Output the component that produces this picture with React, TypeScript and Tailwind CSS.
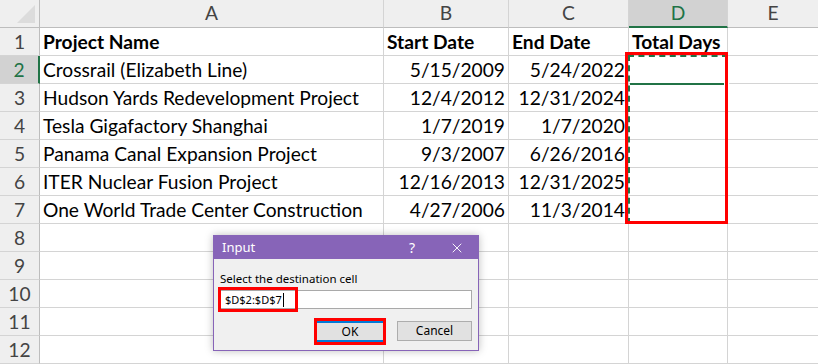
import { X } from 'lucide-react';

type Row = { name: string; start: string; end: string };

const rows: Row[] = [
  { name: 'Crossrail (Elizabeth Line)', start: '5/15/2009', end: '5/24/2022' },
  { name: 'Hudson Yards Redevelopment Project', start: '12/4/2012', end: '12/31/2024' },
  { name: 'Tesla Gigafactory Shanghai', start: '1/7/2019', end: '1/7/2020' },
  { name: 'Panama Canal Expansion Project', start: '9/3/2007', end: '6/26/2016' },
  { name: 'ITER Nuclear Fusion Project', start: '12/16/2013', end: '12/31/2025' },
  { name: 'One World Trade Center Construction', start: '4/27/2006', end: '11/3/2014' },
];

const columns = ['A', 'B', 'C', 'D', 'E'];

const cell = 'h-[28px] pt-[2px] border-r border-b border-[#d4d4d4] flex items-center overflow-visible whitespace-nowrap';

function ColumnHeader({ label }: { label: string }) {
  const active = label === 'D';
  return (
    <div
      className={`h-[28px] flex items-center justify-center border-r ${
        active
          ? 'bg-[#d2d2d2] text-[#217346] border-r-[#d4d4d4] border-b-2 border-b-[#217346]'
          : 'bg-[#efefef] text-[#444] border-r-[#d4d4d4] border-b border-b-[#bdbdbd]'
      }`}
    >
      {label}
    </div>
  );
}

function RowHeader({ n }: { n: number }) {
  const active = n === 2;
  return (
    <div
      className={`h-[28px] pt-[2px] flex items-center justify-center border-b ${
        active
          ? 'bg-[#d2d2d2] text-[#217346] border-b-[#d4d4d4] border-r-2 border-r-[#217346]'
          : 'bg-[#efefef] text-[#444] border-b-[#d4d4d4] border-r border-r-[#bdbdbd]'
      }`}
    >
      {n}
    </div>
  );
}

function InputDialog() {
  return (
    <div className="absolute left-[213px] top-[235px] w-[266px] h-[116px] border border-[#8764b8] bg-[#f0f0f0] shadow-[0_0_8px_rgba(0,0,0,0.25)] font-['Noto_Sans',sans-serif] text-[11px] text-black">
      <div className="h-[23px] bg-[#8764b8] flex items-center pl-[8px] text-white text-[13px]">
        <span>Input</span>
        <span className="ml-auto mr-[34px] text-[14px]">?</span>
        <X className="mr-[13px] h-[16px] w-[16px]" strokeWidth={1.4} />
      </div>
      <div className="px-[6px] pt-[13px]">
        <div className="leading-[14px] h-[16px] text-[11.5px]">Select the destination cell</div>
        <div className="relative mt-[2px] h-[19px] border border-[#a9a9a9] bg-white flex items-center pl-[4px] leading-none">
          <span>$D$2:$D$7</span>
          <span className="ml-[1px] h-[14px] w-px bg-black" />
          <div className="absolute left-[-3px] top-[-4px] w-[80px] h-[25px] border-[3px] border-[#ff0000]" />
        </div>
        <div className="mt-[12px] flex justify-end gap-[11px]">
          <div className="relative w-[72px] h-[27px] border-[3px] border-[#ff0000] -mt-[3px]">
            <div className="h-full bg-[#e1e1e1] border-y-2 border-[#0078d7] flex items-center justify-center text-[12px]">OK</div>
          </div>
          <div className="w-[75px] h-[20px] bg-[#e1e1e1] border border-[#adadad] flex items-center justify-center text-[12px]">
            Cancel
          </div>
        </div>
      </div>
    </div>
  );
}

export default function App() {
  return (
    <div className="relative w-[818px] h-[364px] overflow-hidden bg-white font-['Lato',sans-serif] text-[19.2px] text-black">
      <div className="grid grid-cols-[40px_344px_125px_120px_99px_91px]">
        {/* corner */}
        <div className="h-[28px] bg-[#efefef] border-r border-b border-[#bdbdbd] relative">
          <div className="absolute right-[4px] bottom-[4px] w-0 h-0 border-l-[18px] border-l-transparent border-b-[18px] border-b-[#dcdcdc]" />
        </div>
        {columns.map((c) => (
          <ColumnHeader key={c} label={c} />
        ))}

        <RowHeader n={1} />
        <div className={`${cell} pl-[3px] font-bold`}>Project Name</div>
        <div className={`${cell} pl-[3px] font-bold`}>Start Date</div>
        <div className={`${cell} pl-[3px] font-bold`}>End Date</div>
        <div className={`${cell} pl-[3px] font-bold`}>Total Days</div>
        <div className={cell} />

        {rows.map((r, i) => (
          <div key={r.name} className="contents">
            <RowHeader n={i + 2} />
            <div className={`${cell} pl-[3px]`}>{r.name}</div>
            <div className={`${cell} justify-end pr-[3px]`}>{r.start}</div>
            <div className={`${cell} justify-end pr-[3px]`}>{r.end}</div>
            <div className={cell} />
            <div className={cell} />
          </div>
        ))}

        {[8, 9, 10, 11, 12].map((n) => (
          <div key={n} className="contents">
            <RowHeader n={n} />
            <div className={cell} />
            <div className={cell} />
            <div className={cell} />
            <div className={cell} />
            <div className={cell} />
          </div>
        ))}
      </div>

      {/* copy marquee around D2:D7 */}
      <div className="absolute left-[628px] top-[55px] w-[100px] h-[169px] border-2 border-dashed border-[#217346]" />
      {/* active cell bottom edge + fill handle */}
      <div className="absolute left-[630px] top-[83px] w-[96px] h-[2px] bg-[#217346]" />
      <div className="absolute left-[724px] top-[81px] w-[5px] h-[5px] bg-[#217346] border border-white" />
      {/* highlight box */}
      <div className="absolute left-[625px] top-[52px] w-[103px] h-[172px] border-[3px] border-[#ff0000]" />

      <InputDialog />
    </div>
  );
}
